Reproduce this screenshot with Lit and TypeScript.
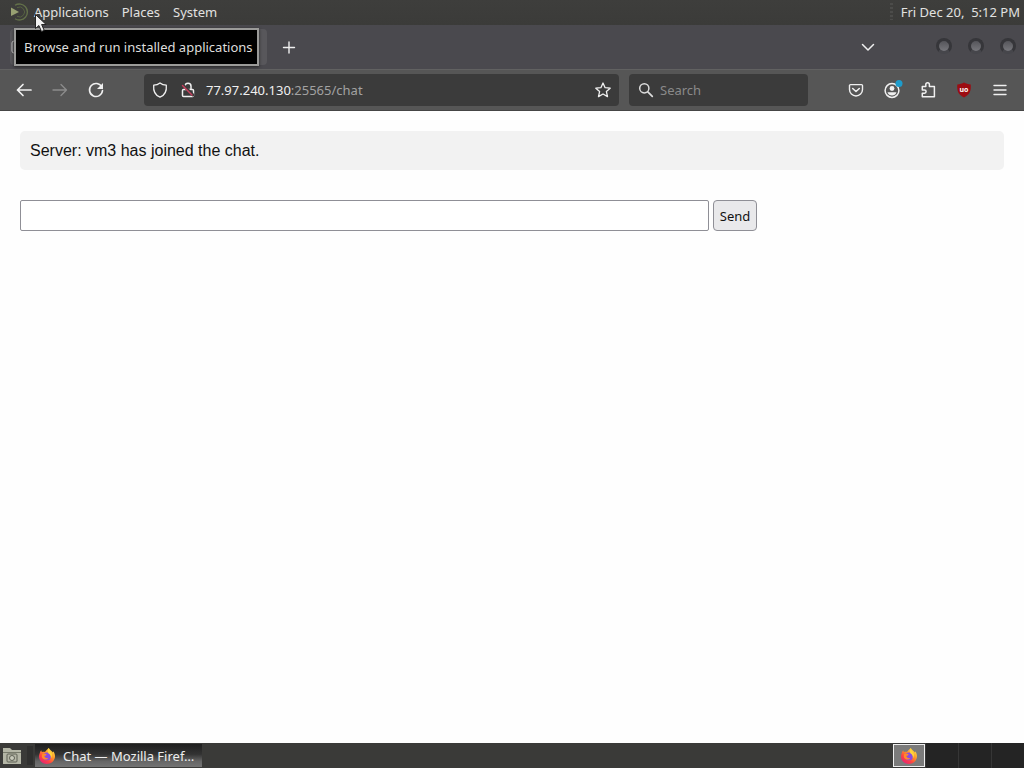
import { LitElement, html, svg, css } from "lit";
import { customElement, property } from "lit/decorators.js";

const base = css`
  *, *::before, *::after { box-sizing: border-box; }
  button, input { font: inherit; color: inherit; margin: 0; }
  button { background: none; border: 0; padding: 0; cursor: default; }
  svg { display: block; flex: none; }
`;

const firefoxLogo = html`
  <svg width="18" height="18" viewBox="0 0 20 20" aria-hidden="true">
    <defs>
      <linearGradient id="flame" x1="0.85" y1="0.05" x2="0.2" y2="0.95">
        <stop offset="0" stop-color="#ffe445" />
        <stop offset="0.4" stop-color="#ff9528" />
        <stop offset="0.7" stop-color="#ff4540" />
        <stop offset="1" stop-color="#e62374" />
      </linearGradient>
    </defs>
    <path fill="url(#flame)" d="M12 1c1 2 3 3 4.600 5 .4-.3.5-.8.500-1.200 2.400 3.500 2.500 8-.3 11-3.700 4-10.200 4-13.600.2C.8 13.300.6 9.500 2 6.600c.2-1.200.8-2.300 1.600-3.100 0 .9.300 1.500.9 2.100 1-.5 2.200-.5 3.200-.1 1.200-1.700 2.500-3 4.300-4.500z" />
    <circle cx="10" cy="10.500" r="4.300" fill="#8a4be0" />
    <path fill="#ff8a2a" d="M4.500 8c1.700-1.200 3.500-.8 5.200.2-.3 1-1.500 1.200-2.600 1.600 0 2 2.200 3.300 4.400 2.600-2 2.700-6.600 1.800-7.300-1.600z" />
    <path fill="#ffd43a" d="M12 1c.2 2.500 3 4 3.500 7 .3 2-.3 3.500-1.200 4.500.3-2.500-.7-4.300-2.600-5.300C10.500 5 11 2.500 12 1z" />
  </svg>`;

const shapes: Record<string, unknown> = {
  back: svg`<path d="M15 8H1.500M7 2.500 1.500 8 7 13.500" stroke-width="1.700"/>`,
  forward: svg`<path d="M1 8h13.500M9 2.500 14.500 8 9 13.500" stroke-width="1.300"/>`,
  reload: svg`<path d="M13.800 5A6.500 6.500 0 1 0 14.500 8.500" stroke-width="1.600"/><path d="M15 1v6H9z" fill="currentColor" stroke="none"/>`,
  shield: svg`<path d="M8 .9C6.300 2.200 4 3 1.700 3.200c-.5 5 1 9.800 6.300 12 5.300-2.200 6.800-7 6.300-12C12 3 9.700 2.200 8 .9z"/>`,
  lock: svg`<path d="M5 7V4.200a3 3 0 0 1 6 0V7M3.500 7.500h9a1 1 0 0 1 1 1v5a1 1 0 0 1-1 1h-9a1 1 0 0 1-1-1v-5a1 1 0 0 1 1-1z" stroke-width="1.500"/><path d="M3 3l10 10" stroke="#3b3b3b" stroke-width="3"/><path d="M2.500 3.500l9.500 9.500" stroke="#c9405f" stroke-width="1.500"/>`,
  star: svg`<path d="M8 1l2.100 4.700 5.100.5-3.800 3.400 1.100 5L8 12l-4.500 2.600 1.100-5L.8 6.200l5.100-.5z"/>`,
  search: svg`<circle cx="6.300" cy="6.300" r="4.600" stroke-width="1.500"/><path d="M9.800 9.800l4.500 4.500" stroke-width="1.700"/>`,
  pocket: svg`<path d="M2.500 2.600h11a1 1 0 0 1 1 1v3.900a6.500 6.500 0 0 1-13 0V3.600a1 1 0 0 1 1-1z" stroke-width="1.400"/><path d="M4.700 6.500 8 9.500l3.300-3" stroke-width="1.600"/>`,
  account: svg`<circle cx="8" cy="8.500" r="6.900" stroke-width="1.500"/><circle cx="8" cy="6.500" r="2.400" fill="currentColor" stroke="none"/><path d="M3.500 10.200h9c-.7 2.300-2.400 3.300-4.500 3.300s-3.800-1-4.500-3.300z" fill="currentColor" stroke="none"/><circle cx="15" cy="1.500" r="3.500" fill="#1d9ccc" stroke="none"/>`,
  extensions: svg`<path d="M2.300 6.200V4.400h3.500V2.600a1.800 1.800 0 0 1 3.600 0v1.800h5v10.400H2.300v-3.600h2.200a1.600 1.600 0 0 0 0-3.200H2.300z" stroke-width="1.500"/>`,
  menu: svg`<path d="M2 3.500h12M2 8h12M2 12.500h12" stroke-width="1.400"/>`,
  plus: svg`<path d="M8 3v11M2.500 8.500h11" stroke-width="1.400"/>`,
  chevron: svg`<path d="M2.500 5.500 8 11l5.500-5.500" stroke-width="1.500"/>`,
};

const icon = (name: string) => html`
  <svg width="16" height="16" viewBox="0 0 16 16" fill="none" stroke="currentColor" stroke-width="1.300"
    stroke-linecap="round" stroke-linejoin="round" overflow="visible" aria-hidden="true">${shapes[name]}</svg>`;

@customElement("desktop-panel")
class DesktopPanel extends LitElement {
  static styles = [base, css`
    :host { display: block; position: relative; z-index: 2; }
    .bar { display: flex; align-items: center; height: 25px; padding: 0 4px 2px 10px; color: #e2e2e0;
      background: linear-gradient(#3e3e3c, #3b3b39); }
    .menus { display: flex; gap: 13px; flex: 1; }
    .menus button { display: flex; align-items: center; gap: 6px; }
    .clock { display: flex; align-items: center; gap: 8px; white-space: pre; }
    .grip { width: 3px; height: 17px; background: repeating-linear-gradient(#4c4c4a 0 2px, #3e3e3c 2px 4px); }
    .tooltip { position: absolute; left: 14px; top: 28px; padding: 8px 4px 8px 8px; line-height: 18px; white-space: nowrap;
      color: #dededc; background: #000; border: 2px solid #9b9b99; box-shadow: 0 1px 3px #222; }
    .pointer { position: absolute; left: 34px; top: 13px; }
  `];
  render() {
    return html`
      <header class="bar">
        <nav class="menus" aria-label="Desktop">
          <button aria-describedby="tip">
            <svg width="18" height="18" viewBox="0 0 18 18" fill="none" aria-hidden="true">
              <path d="M1 4.500 9 9l-8 4z" fill="#98a172" />
              <path d="M5 2.300a8 8 0 1 1 0 13.400" stroke="#63714a" stroke-width="1.300" />
              <path d="M7 4.700a5 5 0 1 1 0 8.600" stroke="#566241" stroke-width="1" />
            </svg>Applications</button>
          <button>Places</button>
          <button>System</button>
        </nav>
        <time class="clock"><span class="grip"></span>Fri Dec 20,  5:12 PM</time>
      </header>
      <div class="tooltip" id="tip" role="tooltip">Browse and run installed applications</div>
      <svg class="pointer" width="14" height="21" viewBox="0 0 14 21" aria-hidden="true">
        <path d="M1.500 1.500v14l3.400-3 2.600 6 2.700-1.200-2.600-5.800h4.500z" fill="#f2f2f2" stroke="#242424" />
      </svg>`;
  }
}

@customElement("browser-chrome")
class BrowserChrome extends LitElement {
  static styles = [base, css`
    :host { display: block; color: #f0f0f0; }
    button { display: grid; place-items: center; width: 32px; height: 32px; flex: none; }
    .tabs { display: flex; align-items: center; height: 44px; padding: 0 8px; background: #4a494e; }
    .tab { align-self: stretch; width: 257px; margin: 4px 6px 4px 2px; border-radius: 4px; background: #58575b;
      display: flex; align-items: center; flex: none; }
    .space { flex: 1; }
    .windows { display: flex; gap: 16px; margin: 0 0 2px 52px; }
    .windows button { width: 16px; height: 16px; border-radius: 50%; border: 3px solid #36363a;
      background: linear-gradient(#55555a, #77777c); border-bottom-color: #46464b; }
    .nav { display: flex; align-items: center; height: 42px; padding: 0 8px 1px; background: #565656;
      border-top: 1px solid #616161; border-bottom: 1px solid #454545; }
    .history { display: flex; gap: 4px; margin-right: 32px; }
    .history button:disabled { color: #8c8c8c; }
    .address, .search { display: flex; align-items: center; height: 32px; border-radius: 4px; background: #3b3b3b; }
    .address { flex: 1; min-width: 0; padding-left: 2px; }
    .address button { width: 28px; }
    .address button:last-child { width: 32px; }
    .url { flex: 1; min-width: 0; padding-left: 4px; color: #a2a2a2; text-decoration: none; white-space: nowrap; overflow: hidden; }
    .host { color: #f0f0f0; }
    .search { flex: 0 1 179px; min-width: 0; gap: 6px; margin: 0 32px 0 10px; padding: 0 9px; color: #dcdcdc; }
    .search input { flex: 1; min-width: 0; background: none; border: 0; padding: 0; outline: 0; }
    .search input::placeholder { color: #8a8a8a; opacity: 1; }
    .tools { display: flex; gap: 4px; }
    .badge text { font: bold 7px "Noto Sans", sans-serif; fill: #fff; }
  `];
  @property() host = "77.97.240.130";
  @property() path = ":25565/chat";
  render() {
    return html`
      <div class="tabs">
        <div class="tab">
          <svg width="16" height="16" viewBox="0 0 16 16" fill="none" aria-hidden="true"><rect x="2" y="2" width="12" height="12" rx="2" stroke="#c9c9c9" /></svg>
        </div>
        <button aria-label="New tab">${icon("plus")}</button>
        <span class="space"></span>
        <button aria-label="List all tabs">${icon("chevron")}</button>
        <div class="windows">
          <button aria-label="Minimize"></button><button aria-label="Maximize"></button><button aria-label="Close"></button>
        </div>
      </div>
      <div class="nav">
        <div class="history">
          <button aria-label="Back">${icon("back")}</button>
          <button aria-label="Forward" disabled>${icon("forward")}</button>
          <button aria-label="Reload">${icon("reload")}</button>
        </div>
        <div class="address">
          <button aria-label="Tracking protection">${icon("shield")}</button>
          <button aria-label="Connection not secure">${icon("lock")}</button>
          <a class="url" href="#"><span class="host">${this.host}</span>${this.path}</a>
          <button aria-label="Bookmark this page">${icon("star")}</button>
        </div>
        <label class="search">${icon("search")}<input type="search" aria-label="Search" placeholder="Search" /></label>
        <div class="tools">
          <button aria-label="Save to Pocket">${icon("pocket")}</button>
          <button aria-label="Account">${icon("account")}</button>
          <button aria-label="Extensions">${icon("extensions")}</button>
          <button aria-label="uBlock Origin">
            <svg class="badge" width="16" height="16" viewBox="0 0 16 16" aria-hidden="true">
              <path d="M8 .5C6 1.800 4 2.200 1.300 2.400c-.5 6 .8 10 6.700 13 5.900-3 7.200-7 6.700-13C12 2.200 10 1.800 8 .5z" fill="#9c0c12" />
              <text x="8" y="10" text-anchor="middle">uo</text>
            </svg>
          </button>
          <button aria-label="Open application menu">${icon("menu")}</button>
        </div>
      </div>`;
  }
}

@customElement("chat-page")
class ChatPage extends LitElement {
  static styles = [base, css`
    :host { display: block; padding: 20px; background: #fefefe; color: #111; }
    .log { list-style: none; margin: 0 0 30px; padding: 0; font: 16px/19px "Liberation Sans", Arial, sans-serif; }
    .log li { padding: 10px; border-radius: 5px; background: #f2f2f2; }
    .compose { display: flex; gap: 4px; }
    .compose input { width: 70%; height: 31px; padding: 0 8px; border: 1px solid #8f8f96; border-radius: 2px; background: #fff; }
    .compose button { height: 31px; padding: 0 6px; border: 1px solid #8f8f96; border-radius: 4px; background: #e9e9eb; }
  `];
  @property({ type: Array }) messages = ["Server: vm3 has joined the chat."];
  render() {
    return html`
      <ul class="log">${this.messages.map((m) => html`<li>${m}</li>`)}</ul>
      <form class="compose" @submit=${(e: Event) => e.preventDefault()}>
        <input type="text" aria-label="Message" /><button type="submit">Send</button>
      </form>`;
  }
}

@customElement("task-bar")
class TaskBar extends LitElement {
  static styles = [base, css`
    :host { display: flex; align-items: center; height: 25px; padding-left: 2px; background: #3a3a38; color: #ededed; }
    .desktop { margin-right: 5px; }
    .grip { width: 6px; height: 19px; margin-right: 2px; background: #30302f; }
    .task { display: flex; align-items: center; gap: 7px; height: 23px; width: 167px; padding: 0 3px;
      background: linear-gradient(#1f1f1f, #333 45%, #666 75%, #747474); white-space: nowrap; }
    .task span { overflow: hidden; text-overflow: ellipsis; }
    .space { flex: 1; }
    .switcher { display: grid; grid-template-columns: repeat(4, 32px); gap: 1px; height: 25px; background: #363636; }
    .switcher button { display: grid; place-items: center; background: #242424; }
    .switcher .current { border: 1px solid #eee; margin: 1px 0; background: #7b7b7b; }
  `];
  render() {
    return html`
      <button class="desktop" aria-label="Show desktop">
        <svg width="20" height="18" viewBox="0 0 20 18" fill="none" aria-hidden="true">
          <path d="M1 1h7l2 2h9v14H1z" fill="#b4b6a6" />
          <path d="M1 5.500h18" stroke="#777a6b" />
          <rect x="5" y="7" width="10" height="8" rx="1" stroke="#5f6155" />
          <circle cx="10" cy="11" r="2.500" fill="#c8cabb" stroke="#5f6155" />
        </svg>
      </button>
      <span class="grip"></span>
      <button class="task">${firefoxLogo}<span>Chat — Mozilla Firef…</span></button>
      <span class="space"></span>
      <div class="switcher">
        <button class="current" aria-label="Workspace 1">${firefoxLogo}</button>
        <button aria-label="Workspace 2"></button><button aria-label="Workspace 3"></button><button aria-label="Workspace 4"></button>
      </div>`;
  }
}

@customElement("app-root")
class AppRoot extends LitElement {
  static styles = css`
    :host { display: flex; flex-direction: column; min-height: 100vh; font: 13px/18px "Noto Sans", sans-serif; }
    .page { flex: 1; }
  `;
  render() {
    return html`
      <desktop-panel></desktop-panel>
      <browser-chrome></browser-chrome>
      <chat-page class="page"></chat-page>
      <task-bar></task-bar>`;
  }
}
